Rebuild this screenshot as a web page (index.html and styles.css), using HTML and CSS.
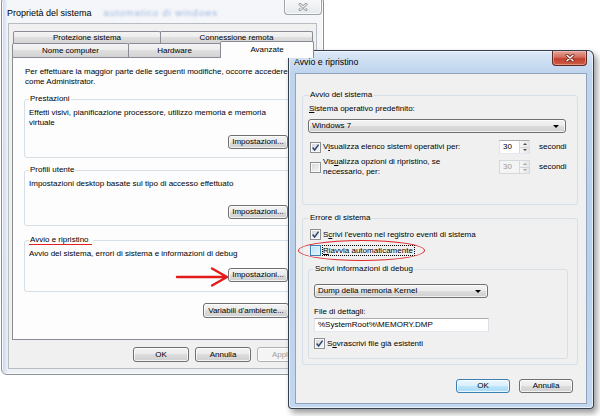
FILE: index.html
```html
<!DOCTYPE html>
<html lang="it">
<head>
<meta charset="utf-8">
<title>Proprietà del sistema</title>
<link rel="stylesheet" href="styles.css">
</head>
<body>
<div class="win win-back">
  <div class="titlebar">
    <span class="title">Proprietà del sistema</span>
    <span class="title ghost">automatico di windows</span>
    <div class="close close-off">
      <svg width="10" height="8" viewBox="0 0 10 8"><path d="M2 1.2 L8 6.8 M8 1.2 L2 6.8" stroke="#8d9298" stroke-width="2.8" stroke-linecap="round" fill="none"/><path d="M2 1.2 L8 6.8 M8 1.2 L2 6.8" stroke="#eef0f2" stroke-width="1.2" stroke-linecap="round" fill="none"/></svg>
    </div>
  </div>
  <div class="client client-back">
    <div class="tabrow r1">
      <div class="tab t1">Protezione sistema</div>
      <div class="tab t2">Connessione remota</div>
    </div>
    <div class="tabrow r2">
      <div class="tab t3">Nome computer</div>
      <div class="tab t4">Hardware</div>
      <div class="tab t5 sel">Avanzate</div>
    </div>
    <div class="panel">
      <p class="intro">Per effettuare la maggior parte delle seguenti modifiche, occorre accedere<br>come Administrator.</p>
      <fieldset class="gb gb-a">
        <legend>Prestazioni</legend>
        <p>Effetti visivi, pianificazione processore, utilizzo memoria e memoria<br>virtuale</p>
        <div class="btnrow"><span class="btn b-imp">Impostazioni...</span></div>
      </fieldset>
      <fieldset class="gb gb-b">
        <legend>Profili utente</legend>
        <p>Impostazioni desktop basate sul tipo di accesso effettuato</p>
        <div class="btnrow"><span class="btn b-imp">Impostazioni...</span></div>
      </fieldset>
      <fieldset class="gb gb-c">
        <legend><span class="mark">Avvio e ripristino</span></legend>
        <p>Avvio del sistema, errori di sistema e informazioni di debug</p>
        <div class="btnrow"><span class="btn b-imp">Impostazioni...</span></div>
      </fieldset>
      <div class="btnrow envrow"><span class="btn b-env">Variabili d'ambiente...</span></div>
    </div>
    <div class="btnrow dlgrow">
      <span class="btn b-dlg">OK</span>
      <span class="btn b-dlg">Annulla</span>
      <span class="btn b-dlg dis">Applica</span>
    </div>
  </div>
</div>

<div class="win win-front">
  <div class="titlebar tb-front">
    <span class="title">Avvio e ripristino</span>
    <div class="close close-on">
      <svg width="10" height="8" viewBox="0 0 10 8"><path d="M2 1.2 L8 6.8 M8 1.2 L2 6.8" stroke="#6b2119" stroke-width="3" stroke-linecap="round" fill="none"/><path d="M2 1.2 L8 6.8 M8 1.2 L2 6.8" stroke="#ffffff" stroke-width="1.5" stroke-linecap="round" fill="none"/></svg>
    </div>
  </div>
  <div class="client client-front">
    <fieldset class="gb fg1">
      <legend>Avvio del sistema</legend>
      <p class="lbl"><u>S</u>istema operativo predefinito:</p>
      <div class="combo c-os"><span>Windows 7</span><i class="arrow"></i></div>
      <div class="srow sr1">
        <div class="chk"><span class="cb on"><svg width="9" height="9" viewBox="0 0 9 9"><path d="M1.6 4.6 L3.6 7 L7.6 1.6" stroke="#2e4574" stroke-width="1.5" fill="none"/></svg></span><span>V<u>i</u>sualizza elenco sistemi operativi per:</span></div>
        <div class="spin"><span class="spin-val">30</span><span class="spin-btns"><i class="up"></i><i class="dn"></i></span></div>
        <span class="unit">secondi</span>
      </div>
      <div class="srow sr2">
        <div class="chk"><span class="cb"></span><span>Vis<u>u</u>alizza opzioni di ripristino, se<br>necessario, per:</span></div>
        <div class="spin dis"><span class="spin-val">30</span><span class="spin-btns"><i class="up"></i><i class="dn"></i></span></div>
        <span class="unit">secondi</span>
      </div>
    </fieldset>
    <fieldset class="gb fg2">
      <legend>Errore di sistema</legend>
      <div class="chk cr1"><span class="cb on"><svg width="9" height="9" viewBox="0 0 9 9"><path d="M1.6 4.6 L3.6 7 L7.6 1.6" stroke="#2e4574" stroke-width="1.5" fill="none"/></svg></span><span>S<u>c</u>rivi l'evento nel registro eventi di sistema</span></div>
      <div class="chk cr2"><span class="cb hot"></span><span class="focus"><u>R</u>iavvia automaticamente</span></div>
      <fieldset class="gb fg3">
        <legend>Scrivi informazioni di debug</legend>
        <div class="combo c-dump"><span>Dump della memoria Kernel</span><i class="arrow"></i></div>
        <p class="lbl lbl-file">File di dettagli:</p>
        <div class="textbox">%SystemRoot%\MEMORY.DMP</div>
        <div class="chk cr3"><span class="cb on"><svg width="9" height="9" viewBox="0 0 9 9"><path d="M1.6 4.6 L3.6 7 L7.6 1.6" stroke="#2e4574" stroke-width="1.5" fill="none"/></svg></span><span>S<u>o</u>vrascrivi file già esistenti</span></div>
      </fieldset>
    </fieldset>
    <div class="btnrow frontrow">
      <span class="btn b-dlg2 def">OK</span>
      <span class="btn b-dlg2">Annulla</span>
    </div>
  </div>
</div>

<div class="ellipse"></div>
<svg class="arrow-mark" width="56" height="28" viewBox="0 0 56 28"><path d="M3 13 L52 13 M38 4.5 L53 13 L38 21.5" stroke="#e31b1b" stroke-width="2.4" stroke-linecap="round" stroke-linejoin="round" fill="none"/></svg>
</body>
</html>
```

FILE: styles.css
```css
* { box-sizing: border-box; }
html, body { margin: 0; padding: 0; }
body {
  width: 600px;
  height: 416px;
  position: relative;
  overflow: hidden;
  background: #ffffff;
  font-family: "Liberation Sans", Arial, sans-serif;
  font-size: 8px;
  line-height: 10px;
  color: #000;
}
p { margin: 0; white-space: nowrap; }
u { text-decoration: underline; text-underline-offset: 1px; }

/* windows */
.win { position: absolute; display: flex; flex-direction: column; }
.win-back {
  left: 1px; top: -4px; width: 323px; height: 379px;
  border: 1px solid #8b9096;
  border-radius: 6px;
  padding: 0 6px 5px;
  background:
    linear-gradient(90deg, rgba(120,150,225,.35) 0, rgba(150,175,235,.15) 4px, rgba(255,255,255,0) 6px),
    linear-gradient(180deg, #f4f6f9 0, #eef1f5 100%);
  box-shadow: inset 0 0 0 1px rgba(255,255,255,.8);
}
.win-front {
  left: 288px; top: 50px; width: 306px; height: 359px;
  border: 1px solid rgba(35,45,60,.9);
  border-radius: 6px 6px 4px 4px;
  padding: 0 6px 5px;
  background: linear-gradient(180deg, #dde9f7 0, #cadcf1 12px, #bfd4ed 22px, #b9d0eb 60%, #c3d8ef 100%);
  box-shadow: 3px 4px 6px rgba(0,0,0,.4), inset 0 0 0 1px rgba(255,255,255,.6);
}

.titlebar { height: 26px; flex: none; display: flex; align-items: flex-start; }
.tb-front { height: 22px; }
.title { font-size: 9px; line-height: 10px; margin-top: 11px; margin-left: -1px; white-space: nowrap; }
.tb-front .title { margin-top: 6px; font-size: 8.8px; }
.ghost {
  margin-left: 12px; font-size: 9.5px; letter-spacing: .9px;
  color: #9db8e2; filter: blur(1px);
}
.close { margin-left: auto; display: flex; align-items: center; justify-content: center; }
.close-off {
  width: 38px; height: 18px; margin-right: -5px;
  border: 1px solid #9ea3a8; border-top: none;
  border-radius: 0 0 4px 4px;
  background: linear-gradient(#fbfbfc, #e5e8ec);
  box-shadow: inset 0 0 0 1px rgba(255,255,255,.8);
  padding-top: 2px;
}
.close-on {
  width: 35px; height: 15px;
  border: 1px solid #5d2a24; border-top: none;
  border-radius: 0 0 4px 4px;
  background: linear-gradient(#e8a59b 0, #d26c5c 45%, #c2402e 55%, #cf5b44 100%);
  box-shadow: inset 0 0 0 1px rgba(255,210,200,.45);
}

.client { flex: 1; display: flex; flex-direction: column; background: #f0f0f0; }
.client-back { border: 1px solid #b9bdc2; padding: 7px 3px 6px; }
.client-front { border: 1px solid #8ea4c1; padding: 16px 8px 10px 6px; }

/* tabs */
.tabrow { display: flex; flex: none; }
.r1 { height: 12px; padding-left: 1px; }
.r2 { height: 14px; }
.tab {
  flex: none;
  border: 1px solid #898c95; border-bottom: none;
  border-radius: 2px 2px 0 0;
  background: linear-gradient(#f4f4f4 0%, #ececec 50%, #dfdfdf 50%, #d3d3d3 100%);
  text-align: center; white-space: nowrap;
}
.r1 .tab { line-height: 11px; }
.r2 .tab { line-height: 13px; }
.tab + .tab { margin-left: -1px; }
.t1 { width: 148px; }
.t2 { width: 153px; }
.t3 { width: 117px; }
.t4 { width: 93px; }
.t5 { width: 94px; }
.tab.sel {
  background: #fdfdfd;
  margin-top: -2px; height: 17px; margin-bottom: -1px;
  line-height: 15px;
  position: relative; z-index: 1;
}
.panel {
  flex: 1;
  background: #fdfdfd;
  border: 1px solid #898c95;
  padding: 9px 12px 0 11px;
}
.intro { padding-left: 1px; }

/* groupboxes */
.gb {
  margin: 0; min-width: 0;
  border: 1px solid #d5dfe5; border-radius: 3px;
}
.gb legend { padding: 0 1px; line-height: 10px; white-space: nowrap; }
.gb.gb-a { margin-top: 7px; padding: 4px 11px 8px 4px; }
.gb.gb-b { margin-top: 7px; padding: 4px 11px 6px 4px; }
.gb.gb-c { margin-top: 9px; padding: 4px 11px 9px 4px; }
.gb-a .btnrow { margin-top: 7px; }
.gb-b .btnrow { margin-top: 16px; }
.gb-c .btnrow { margin-top: 9px; }
.mark {
  display: inline-block;
  padding-right: 3px; margin-left: -1px; padding-left: 1px;
  background: linear-gradient(#e02020, #e02020) 0 100% / 100% 1.5px no-repeat;
}

/* buttons */
.btnrow { display: flex; justify-content: flex-end; flex: none; }
.btn {
  height: 14px;
  display: flex; align-items: center; justify-content: center;
  border: 1px solid #707070; border-radius: 3px;
  background: linear-gradient(#f3f3f3 0%, #ebebeb 49%, #dddddd 50%, #cfcfcf 100%);
  box-shadow: inset 0 0 0 1px rgba(255,255,255,.75);
  white-space: nowrap;
}
.b-imp { width: 60px; }
.b-env { width: 86px; height: 15px; }
.envrow { margin-top: 11px; padding-right: 11px; }
.dlgrow { margin-top: 7px; gap: 6px; }
.b-dlg { width: 56px; height: 15px; }
.btn.dis { border-color: #adb2b5; background: #f4f4f4; color: #a0a0a0; }
.btn.def {
  border-color: #3c7fb1;
  background: linear-gradient(#eaf6fd 0%, #d9f0fc 49%, #bee6fd 50%, #a7d9f5 100%);
}
.frontrow { margin-top: 14px; gap: 9px; padding-right: 5px; }
.b-dlg2 { width: 54px; }

/* right dialog groups */
.gb.fg1 { padding: 4px 0 27px 6px; }
.combo {
  height: 14px;
  display: flex; align-items: center;
  border: 1px solid #707070; border-radius: 3px;
  background: linear-gradient(#f3f3f3 0%, #ebebeb 49%, #dddddd 50%, #cfcfcf 100%);
  box-shadow: inset 0 0 0 1px rgba(255,255,255,.7);
  padding-left: 3px;
  white-space: nowrap;
}
.arrow {
  margin-left: auto; margin-right: 6px;
  width: 0; height: 0;
  border-left: 3px solid transparent; border-right: 3px solid transparent;
  border-top: 3px solid #000;
}
.c-os { width: 258px; margin-left: -1px; margin-top: 5px; }
.srow { display: grid; grid-template-columns: 190px 31px auto; align-items: center; }
.sr1 { margin-top: 7px; height: 14px; }
.sr2 { margin-top: 3px; height: 20px; }
.unit { margin-left: 9px; }
.chk { display: flex; align-items: center; gap: 2px; white-space: nowrap; }
.srow .chk { padding-left: 1px; }
.cb {
  width: 11px; height: 11px; flex: none;
  border: 1px solid #8e8f8f;
  background: linear-gradient(135deg, #d4d7db 0%, #f6f6f6 100%);
  box-shadow: inset 0 0 0 1px #fafafa;
  display: flex; align-items: center; justify-content: center;
}
.cb.hot {
  border-color: #3c7fb1;
  background: linear-gradient(135deg, #b9dff4 0%, #e8f5fc 100%);
  box-shadow: inset 0 0 0 1px #def2fc;
}
.focus { outline: 1px dotted #000; outline-offset: 0; padding: 0 1px 0 0; line-height: 9px; }

.spin {
  width: 31px; height: 14px;
  display: flex;
  border: 1px solid #abadb3; border-left-color: #e2e3ea; border-right-color: #dbdfe6; border-bottom-color: #e3e9ef;
  background: #fff;
}
.spin-val { flex: 1; padding-left: 3px; line-height: 12px; }
.spin-btns {
  width: 10px; display: flex; flex-direction: column;
  border-left: 1px solid #d6d9de;
  background: linear-gradient(90deg, #f6f6f6, #e6e6e6);
}
.spin-btns i { flex: 1; display: flex; align-items: center; justify-content: center; }
.spin-btns i + i { border-top: 1px solid #d0d3d8; }
.spin-btns i::before {
  content: ""; width: 0; height: 0;
  border-left: 2.5px solid transparent; border-right: 2.5px solid transparent;
}
.spin-btns .up::before { border-bottom: 2px solid #4d4d4d; }
.spin-btns .dn::before { border-top: 2px solid #4d4d4d; }
.spin.dis { background: #f4f4f4; border-color: #d5d8dc; color: #9a9a9a; }
.spin.dis .spin-btns i::before { opacity: .45; }

.gb.fg2 { margin-top: 8px; padding: 6px 0 5px 6px; }
.cr1 { height: 11px; padding-left: 1px; }
.cr2 { height: 11px; margin-top: 5px; padding-left: 1px; }
.gb.fg3 { margin-top: 8px; margin-left: -1px; width: 260px; padding: 10px 0 9px 5px; }
.lbl-file { margin-top: 9px; }
.c-dump { width: 174px; }
.textbox {
  width: 175px; height: 14px; margin-top: 1px;
  border: 1px solid #abadb3; border-left-color: #e2e3ea; border-right-color: #dbdfe6; border-bottom-color: #e3e9ef;
  background: #fff; padding-left: 3px; line-height: 12px; white-space: nowrap;
}
.cr3 { height: 11px; margin-top: 6px; }

/* annotations */
.ellipse {
  position: absolute; left: 298px; top: 240px; width: 127px; height: 21px;
  border: 1.5px solid #e0262a; border-radius: 50%;
}
.arrow-mark { position: absolute; left: 174px; top: 264px; }
```
